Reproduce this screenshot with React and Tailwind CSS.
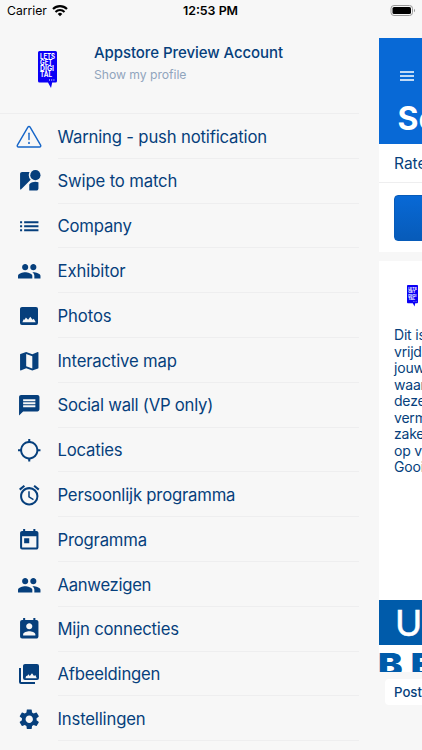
import React from 'react';
import {
  MdStreetview,
  MdList,
  MdPeople,
  MdMap,
  MdMessage,
  MdLocationSearching,
  MdAccessAlarm,
  MdToday,
  MdPermContactCalendar,
  MdSettings,
} from 'react-icons/md';

const WarningIcon = () => (
  <svg width="26" height="24" viewBox="0 0 26 24" fill="none" stroke="#1565c8" strokeWidth="1.4" strokeLinejoin="round" strokeLinecap="round">
    <path d="M11.9 2.2 1.4 20.2c-.5.9 0 1.8 1.1 1.8h21c1.1 0 1.6-.9 1.1-1.8L14.1 2.2c-.5-.9-1.7-.9-2.2 0Z" />
    <path d="M13 8.3v6.2" />
    <path d="M13 17.7v.5" strokeWidth="1.7" />
  </svg>
);

const PhotoIcon = () => (
  <svg width="24" height="24" viewBox="0 0 24 24" fill="currentColor" fillRule="evenodd">
    <path d="M5 3h14a2 2 0 0 1 2 2v14a2 2 0 0 1-2 2H5a2 2 0 0 1-2-2V5c0-1.1.9-2 2-2Zm.4 15.2h13.3l-1.9-3.5-1.3 1-2.2-2.9-2.2 2.9-2.2-2.3-1.3 2.3-.9-.4Z" />
  </svg>
);

const LibraryIcon = () => (
  <svg width="24" height="24" viewBox="0 0 24 24" fill="currentColor" fillRule="evenodd">
    <path d="M8 2h12a2 2 0 0 1 2 2v12a2 2 0 0 1-2 2H8a2 2 0 0 1-2-2V4c0-1.1.9-2 2-2Zm.5 14.2h11.3l-1.5-3.3-1.3 1-2-2.6-2.2 2.8-1.5-1.9-1.3 2-.8-.5Z" />
    <path d="M2 6h2v14h14v2H4a2 2 0 0 1-2-2V6Z" />
  </svg>
);

const menuItems = [
  { label: 'Warning - push notification', icon: WarningIcon, className: 'tracking-[-0.17px]' },
  { label: 'Swipe to match', icon: MdStreetview, className: 'tracking-[-0.15px]' },
  { label: 'Company', icon: MdList, className: 'tracking-[-0.2px]' },
  { label: 'Exhibitor', icon: MdPeople },
  { label: 'Photos', icon: PhotoIcon },
  { label: 'Interactive map', icon: MdMap, className: 'tracking-[-0.17px]' },
  { label: 'Social wall (VP only)', icon: MdMessage, className: 'tracking-[-0.24px]' },
  { label: 'Locaties', icon: MdLocationSearching, className: 'tracking-[-0.2px]' },
  { label: 'Persoonlijk programma', icon: MdAccessAlarm, className: 'tracking-[-0.2px]' },
  { label: 'Programma', icon: MdToday, className: 'tracking-[-0.2px]' },
  { label: 'Aanwezigen', icon: MdPeople, className: 'tracking-[-0.3px]' },
  { label: 'Mijn connecties', icon: MdPermContactCalendar, className: 'tracking-[-0.2px]' },
  { label: 'Afbeeldingen', icon: LibraryIcon, className: 'tracking-[-0.22px]' },
  { label: 'Instellingen', icon: MdSettings, className: 'tracking-[-0.17px]' },
];

const postLines = ['Dit is de', 'vrijdag', 'jouw', 'waar', 'deze', 'vermeld', 'zaken', 'op vrij', 'Gooi'];

// Speech bubble logo, used as avatar
const Logo = ({ className }) => (
  <svg className={className} viewBox="0 0 19 38" fill="#0b00f5">
    <path d="M1.5 0h16A1.5 1.5 0 0 1 19 1.5v28.500a1.500 1.500 0 0 1-1.500 1.500H14.200L13 37l-3-5.500H1.500A1.500 1.500 0 0 1 0 30V1.500A1.500 1.500 0 0 1 1.500 0Z" />
    <g fill="#fff" fontFamily="Inter, sans-serif" fontWeight="700" fontSize="7">
      <text x="2" y="7.8" textLength="15" lengthAdjust="spacingAndGlyphs">LETS</text>
      <text x="2" y="13.9" textLength="12.5" lengthAdjust="spacingAndGlyphs">GET</text>
      <text x="2" y="20" textLength="14" lengthAdjust="spacingAndGlyphs">DIGI</text>
      <text x="2" y="26.1" textLength="12" lengthAdjust="spacingAndGlyphs">TAL</text>
    </g>
    <path d="M11 28.5h1v1h-1zM13.2 28.5h1v1h-1zM15.4 28.5h1v1h-1z" fill="#fff" />
  </svg>
);

const StatusBar = () => (
  <div className="grid h-[22px] w-full shrink-0 grid-cols-3 items-center pl-[7px] pr-[6px] text-black">
    <div className="flex items-center gap-[5px]">
      <span className="text-[12.2px] leading-[22px]">Carrier</span>
      <svg width="16" height="12" viewBox="0 0 16 12" fill="none" stroke="#000" strokeWidth="2.1">
        <path d="M1 4a10 10 0 0 1 14 0" />
        <path d="M3.5 6.9a6.4 6.4 0 0 1 9 0" />
        <path d="M8 11.2 5.7 8.9a3.3 3.3 0 0 1 4.6 0Z" fill="#000" stroke="none" />
      </svg>
    </div>
    <span className="pr-[2px] text-center text-[12.4px] font-semibold leading-[22px]">12:53 PM</span>
    <div className="flex justify-end">
      <svg width="26" height="12" viewBox="0 0 26 12">
        <rect x="1" y="0.5" width="21.5" height="10" rx="3" fill="none" stroke="#999" />
        <rect x="2.5" y="2" width="18.5" height="7" rx="1.6" />
        <path d="M24 3.8c1.400.5 1.400 2.900 0 3.400Z" fill="#999" />
      </svg>
    </div>
  </div>
);

const Sidebar = () => (
  <div className="flex w-[379px] shrink-0 flex-col">
    <div className="mr-[20px] flex h-[92px] shrink-0 border-b border-[#eeeeef]">
      <div className="w-[94px] shrink-0 pl-[38px] pt-[29px]">
        <Logo className="h-[38px] w-[19px]" />
      </div>
      <div className="pt-[21px]">
        <p className="whitespace-nowrap text-[15px] font-medium leading-[20px] tracking-[-0.07px]">Appstore Preview Account</p>
        <p className="pt-[3px] text-[12.2px] leading-[18px] tracking-[-0.04px] text-[#91a5bd]">Show my profile</p>
      </div>
    </div>
    {menuItems.map(({ label, icon: Icon, className }) => (
      <div key={label} className="flex h-[44.8px] shrink-0">
        <div className="flex w-[57.5px] shrink-0 items-center justify-center pt-[1px]">
          <Icon size={24.5} />
        </div>
        <div className="mr-[20px] flex flex-1 items-center border-b border-[#eeeeef] pt-[2.4px]">
          <span className={`whitespace-nowrap text-[16.7px] ${className || 'tracking-[-0.1px]'}`}>{label}</span>
        </div>
      </div>
    ))}
  </div>
);

const Feed = () => (
  <div className="flex w-[43px] shrink-0 flex-col overflow-hidden pt-4">
    <div className="flex h-[106px] shrink-0 flex-col bg-[#0869d6] pl-[21px] text-white">
      <svg className="mt-[33px] shrink-0" width="14" height="10" viewBox="0 0 14 10" fill="#fff">
        <path d="M0 .2h14v1.500H0zM0 4.200h14v1.500H0zM0 8.200h14v1.500H0z" />
      </svg>
      <h1 className="-ml-[2.500px] mt-[17px] whitespace-nowrap text-[32px] font-bold leading-[41px]">Social</h1>
    </div>
    <div className="h-[39px] shrink-0 whitespace-nowrap border-b border-[#eeeeef] bg-white pl-[15px] text-[15.5px] leading-[40px]">Rate this</div>
    <div className="h-[69px] shrink-0 bg-white pl-[15px] pt-[12px]">
      <div className="h-[46px] w-[120px] rounded-[4px] border border-[#075bb9] bg-linear-to-b from-[#0869d6] to-[#075bb9]"></div>
    </div>
    <div className="mt-[9px] flex h-[339px] shrink-0 flex-col bg-white pt-[24px]">
      <Logo className="ml-[28px] h-[22px] w-[11px] shrink-0" />
      <div className="mt-[20px] pl-[15px] text-[14px] leading-[16.5px] tracking-[-0.2px]">
        {postLines.map((line) => (
          <p key={line} className="whitespace-nowrap">{line}</p>
        ))}
      </div>
    </div>
    <div className="h-[45px] shrink-0 overflow-hidden bg-[#005baa] pl-[16px] font-['Lato'] text-[37px] leading-[44px] text-white [-webkit-text-stroke:0.5px_white]">UIT</div>
    <div className="h-[27px] shrink-0 overflow-hidden bg-white">
      <p className="ml-[-1.5px] origin-left scale-x-[1.15] whitespace-nowrap pt-[3px] text-[32px] font-black leading-[33px] tracking-[7px] text-[#005baa]">BEU</p>
    </div>
    <div className="ml-[6px] mt-[7px] h-[26px] w-[80px] shrink-0 rounded-[4px] bg-white pl-[9px] text-[13.2px] font-medium leading-[26px]">Posts</div>
  </div>
);

const App = () => {
  return (
    <div className="flex h-[750px] w-[422px] flex-col overflow-hidden bg-[#f7f7f7] font-['Inter',sans-serif] text-[#063f7c]">
      <StatusBar />
      <div className="flex min-h-0 flex-1">
        <Sidebar />
        <Feed />
      </div>
    </div>
  );
};

export default App;
